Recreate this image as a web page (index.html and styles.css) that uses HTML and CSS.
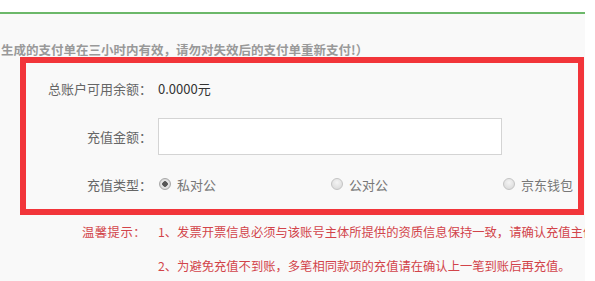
FILE: index.html
```html
<!DOCTYPE html>
<html lang="zh-CN">
<head>
<meta charset="utf-8">
<title>充值</title>
<link rel="stylesheet" href="styles.css">
</head>
<body>
<div class="page">
  <div class="topbar"></div>
  <div class="content">
    <p class="notice">生成的支付单在三小时内有效，请勿对失效后的支付单重新支付!）</p>
    <div class="form-box">
      <div class="row row-balance">
        <span class="label">总账户可用余额：</span>
        <span class="value">0.0000元</span>
      </div>
      <div class="row row-input">
        <span class="label">充值金额：</span>
        <input class="amount" type="text">
      </div>
      <div class="row row-radio">
        <span class="label">充值类型：</span>
        <div class="options">
          <label class="option"><span class="radio checked"></span>私对公</label>
          <label class="option"><span class="radio"></span>公对公</label>
          <label class="option"><span class="radio"></span>京东钱包</label>
        </div>
      </div>
    </div>
    <div class="tips">
      <span class="label tip-label">温馨提示：</span>
      <div class="tip-lines">
        <p class="tip">1、发票开票信息必须与该账号主体所提供的资质信息保持一致，请确认充值主体</p>
        <p class="tip">2、为避免充值不到账，多笔相同款项的充值请在确认上一笔到账后再充值。</p>
      </div>
    </div>
  </div>
</div>
</body>
</html>
```

FILE: styles.css
```css
* { box-sizing: border-box; }
html, body {
  margin: 0;
  padding: 0;
  background: #ffffff;
  overflow: hidden;
}
body {
  font-family: "Noto Sans CJK SC", "Noto Sans", sans-serif;
  font-size: 13px;
  color: #666;
}
.page {
  width: 585px;
  height: 281px;
}
.topbar {
  height: 14px;
  background: #fff;
  border-bottom: 2px solid #6cb86a;
}
.content {
  background: #f9f9f9;
  height: 267px;
  overflow: hidden;
}
.notice {
  margin: 0;
  padding: 27px 0 0 1px;
  height: 43px;
  line-height: 18px;
  font-size: 12.5px;
  font-weight: bold;
  color: #999;
  white-space: nowrap;
}
.form-box {
  margin-left: 20px;
  width: 564px;
  height: 158px;
  border: 6px solid #f2353a;
  padding: 16px 0 0 0;
  display: flex;
  flex-direction: column;
}
.row {
  display: flex;
  align-items: center;
}
.label {
  width: 126px;
  flex: none;
  text-align: right;
  color: #666;
}
.row-balance { height: 18px; }
.value {
  margin-left: 6px;
  color: #333;
}
.row-input { margin-top: 21px; }
.amount {
  margin: 0 0 0 6px;
  width: 344px;
  height: 37px;
  border: 1px solid #d4d4d4;
  background: #fff;
  outline: none;
  padding: 0 8px;
}
.row-radio { margin-top: 20px; height: 18px; }
.options {
  display: flex;
  margin-left: 7px;
}
.option {
  width: 172px;
  display: flex;
  align-items: center;
  color: #777;
}
.radio {
  width: 12px;
  height: 12px;
  border-radius: 50%;
  border: 1px solid #c4c4c4;
  background: radial-gradient(circle at 50% 35%, #f4f4f4 0%, #d6d6d6 100%);
  margin-right: 6px;
}
.radio.checked {
  border-color: #a8a8a8;
  background: radial-gradient(circle at 50% 50%, #555 0, #555 2.5px, #e8e8e8 3px, #c8c8c8 100%);
}
.tips {
  display: flex;
  margin-left: 20px;
  font-size: 12.3px;
  color: #d2444a;
}
.tip-label {
  color: #d2444a;
  line-height: 34px;
  letter-spacing: 0.5px;
}
.tip-lines {
  margin-left: 12px;
}
.tip {
  margin: 0;
  line-height: 34px;
  white-space: nowrap;
}
```
